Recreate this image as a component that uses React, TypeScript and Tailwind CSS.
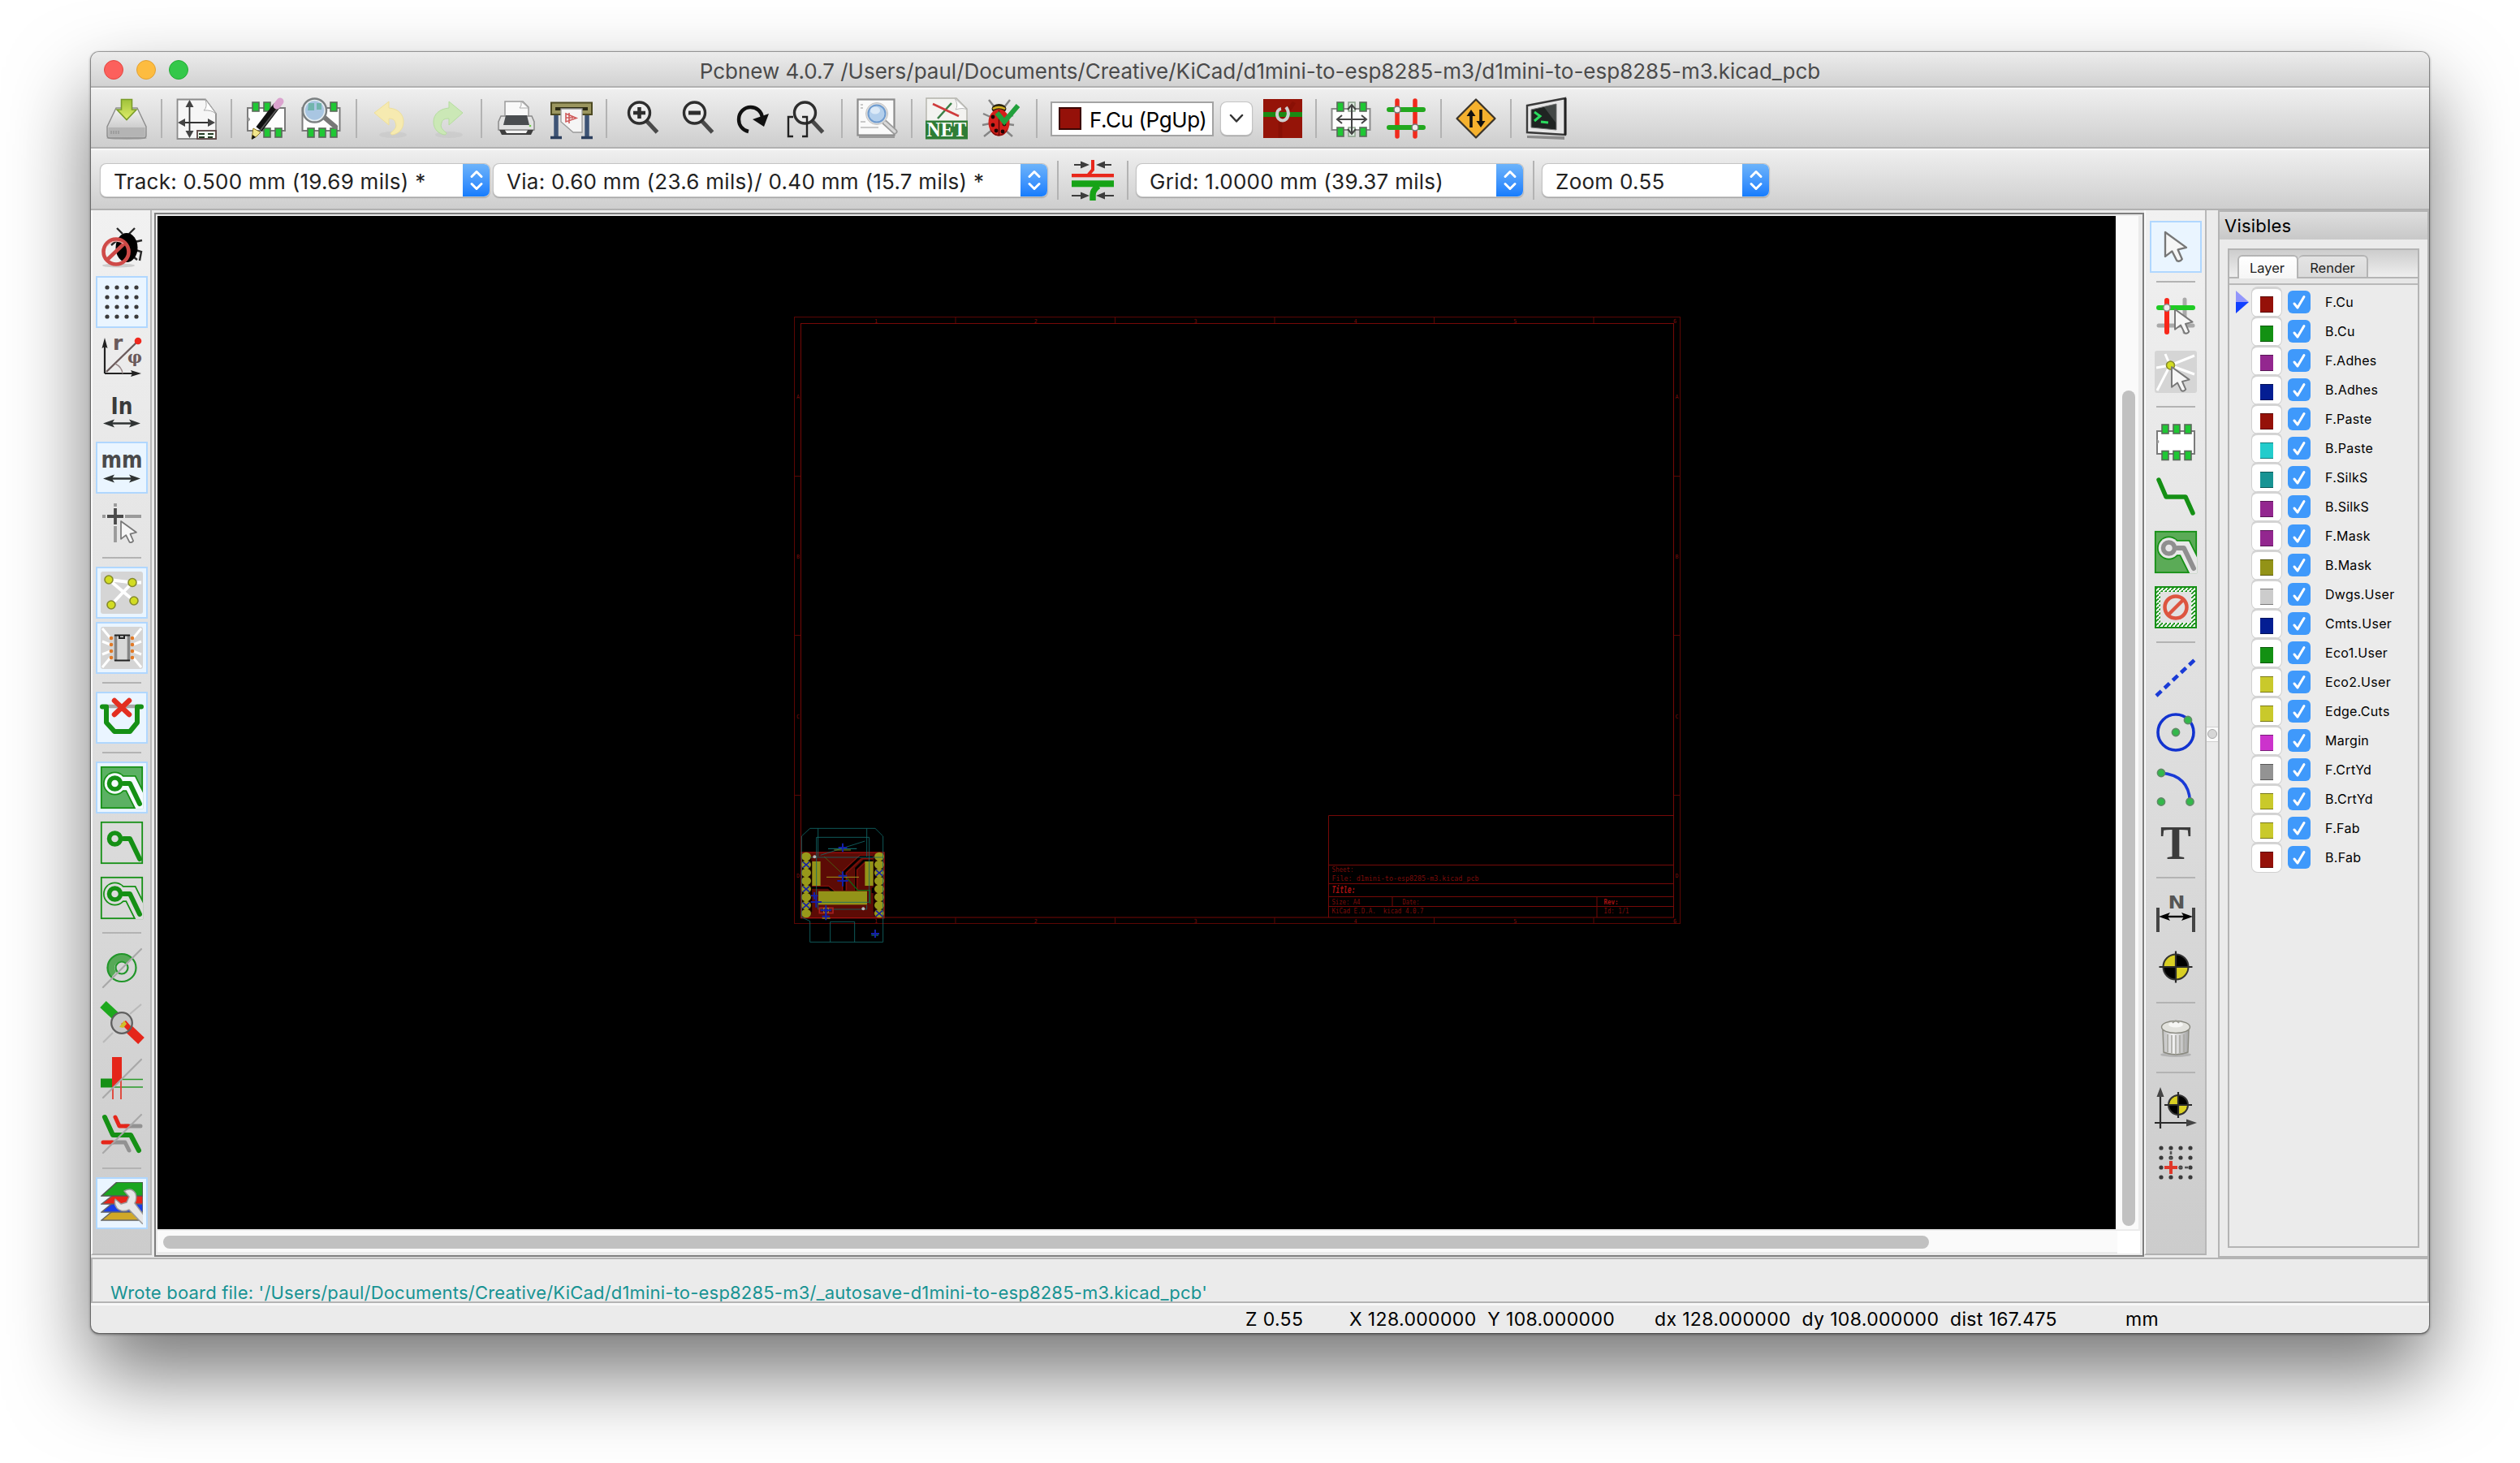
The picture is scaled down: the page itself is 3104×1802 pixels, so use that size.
import React from "react";

const G = "#159015";
const DK = "#3c3c3c";

function Ico({ children }: { children: React.ReactNode }) {
  return (
    <svg viewBox="0 0 52 52" className="h-[52px] w-[52px] shrink-0 overflow-visible" fill="none">
      {children}
    </svg>
  );
}

/* ---------- shared icon parts ---------- */

function Pad({ x, y }: { x: number; y: number }) {
  return <rect x={x - 4} y={y} width="8" height="11" fill="#1fc834" stroke="#5a6a5a" strokeWidth="1.6" />;
}

function Pointer({ x, y, s = 1 }: { x: number; y: number; s?: number }) {
  return (
    <path
      transform={`translate(${x} ${y}) scale(${s})`}
      d="M0 0V23L6.500 18 11 27Q14 28.500 16 25.500L12 16.500 20 14.500Z"
      fill="#f6f6f6"
      stroke="#777"
      strokeWidth="1.8"
      strokeLinejoin="round"
    />
  );
}

function Diag() {
  return <path d="M3 50 50 3" stroke="#a8a8a8" strokeWidth="2.200" strokeLinecap="round" />;
}

function Magnifier({ x = 23.5 }: { x?: number }) {
  return (
    <>
      <path d={`M${x + 9} 29 ${x + 22} 43`} stroke="#4a4a4a" strokeWidth="5" />
      <circle cx={x} cy="19" r="13" stroke="#2e2e2e" strokeWidth="3.400" fill="#ffffff" fillOpacity=".35" />
    </>
  );
}

function DoubleArrow({ y, a = 3, b = 49, c = "#2f3333" }: { y: number; a?: number; b?: number; c?: string }) {
  return (
    <>
      <path d={`M${a + 6} ${y}H${b - 6}`} stroke={c} strokeWidth="2.400" />
      <path d={`M${a} ${y}l14 -5l-3 5l3 5ZM${b} ${y}l-14 -5l3 5l-3 5Z`} fill={c} />
    </>
  );
}

function Target({ x, y, r }: { x: number; y: number; r: number }) {
  return (
    <>
      <circle cx={x} cy={y} r={r} fill="#000" stroke="#333" strokeWidth="2" />
      <path
        d={`M${x - 1} ${y - 1}V${y - r + 1}A${r - 1} ${r - 1} 0 0 0 ${x - r + 1} ${y - 1}ZM${x + 1} ${y + 1}V${y + r - 1}A${r - 1} ${r - 1} 0 0 0 ${x + r - 1} ${y + 1}Z`}
        fill="#d9cf24"
      />
      <path d={`M${x - r - 5} ${y}H${x + r + 5}M${x} ${y - r - 4}V${y + r + 4}`} stroke="#2a2a2a" strokeWidth="2.200" />
    </>
  );
}

const TRACK = "M28 21H36L48 46";

function Zone({ fill, gap, core = G, outline = true }: { fill: string; gap: string; core?: string; outline?: boolean }) {
  return (
    <>
      <rect x=".8" y=".8" width="50.400" height="50.400" fill={fill} stroke={G} strokeWidth="1.800" />
      {outline && (
        <svg x="0" y="0" width="52" height="52" viewBox="0 0 52 52">
          <circle cx="17.500" cy="21" r="14.500" fill={G} />
          <path d="M22 21H37L55 57" stroke={G} strokeWidth="20" />
          <circle cx="17.500" cy="21" r="12.800" fill={gap} />
          <path d="M22 21H37L55 57" stroke={gap} strokeWidth="16.500" />
        </svg>
      )}
      <path d={TRACK} stroke={core} strokeWidth="6" strokeLinecap="round" strokeLinejoin="round" />
      <circle cx="17.500" cy="21" r="7" stroke={core} strokeWidth="5.500" />
    </>
  );
}

function GridDots() {
  return (
    <>
      {[8, 20, 32, 44].map((y) =>
        [8, 20, 32, 44].map((x) => <circle key={`${x}-${y}`} cx={x} cy={y} r="2.600" fill="#3a3a3a" />)
      )}
    </>
  );
}

/* ---------- top toolbar icons ---------- */

const Save = () => (
  <Ico>
    <defs>
      <linearGradient id="drv" x1="0" y1="0" x2="0" y2="1">
        <stop offset="0" stopColor="#f4f4f4" />
        <stop offset="1" stopColor="#b9b9b9" />
      </linearGradient>
      <linearGradient id="arr" x1="0" y1="0" x2="0" y2="1">
        <stop offset="0" stopColor="#9fc23a" />
        <stop offset="1" stopColor="#e0ee6a" />
      </linearGradient>
    </defs>
    <ellipse cx="26" cy="50" rx="25" ry="2" fill="#aaa" />
    <path d="M13 13H39L50 36V47Q50 50 47 50H5Q2 50 2 47V36Z" fill="url(#drv)" stroke="#8d8d8d" strokeWidth="1.400" />
    <path d="M3.500 37H48.500V46Q48.500 48.500 46 48.500H6Q3.500 48.500 3.500 46Z" fill="#b4b4b4" />
    <path d="M7 41V45M10 41V45M13 41V45M16 41V45" stroke="#888" />
    <path d="M19.500 2.500H32.500V15H38L26 27.500 14 15H19.500Z" fill="url(#arr)" stroke="#7a9c2a" strokeWidth="1.600" />
  </Ico>
);

const PageSettings = () => (
  <Ico>
    <path d="M2.500 2.500H37L50 20V51H2.500Z" fill="#f6f6f6" stroke="#8b8b8b" strokeWidth="1.800" />
    <path d="M37 2.500Q40 12 35 16Q44 15 50 20Z" fill="#fff" stroke="#aaa" />
    <path d="M17.500 5V48M6 31H45" stroke="#333" strokeWidth="1.800" />
    <path d="M17.500 3l-5 9h10ZM17.500 50l-5-9h10ZM3 31l9-5v10ZM49 31l-9-5v10Z" fill="#444" />
    <rect x="27" y="41" width="23" height="10" fill="#f4fff4" stroke="#5b4444" strokeWidth="1.800" />
    <path d="M29 45H36M40 45H47M29 49H36M40 49H46" stroke="#223a22" strokeWidth="2.200" />
  </Ico>
);

const ModuleEdit = () => (
  <Ico>
    <rect x="3" y="13" width="46" height="28" fill="#fdfdfd" stroke="#7b7b7b" strokeWidth="2" />
    <path d="M3 24Q8 27 3 30" fill="#999" stroke="#888" />
    <Pad x={13} y={6} /><Pad x={27} y={6} />
    <Pad x={27} y={38} /><Pad x={41} y={38} />
    <path d="M17 39 39 10" stroke="#111" strokeWidth="9" />
    <path d="M19 40 41 12" stroke="#555" strokeWidth="2" />
    <path d="M39 10 43 5" stroke="#dba3cf" strokeWidth="9" strokeLinecap="round" />
    <path d="M10 38 19 43 14 48 8 51Z" fill="#f2e58a" stroke="#8a7620" />
    <path d="M8 52 9 46 13 49Z" fill="#111" />
  </Ico>
);

const ModuleView = () => (
  <Ico>
    <rect x="2.500" y="13" width="46" height="28" fill="#fdfdfd" stroke="#7b7b7b" strokeWidth="2" />
    <Pad x={41} y={6} />
    <Pad x={13} y={38} /><Pad x={27} y={38} /><Pad x={41} y={38} />
    <path d="M30 25 43 36" stroke="#777" strokeWidth="6" strokeLinecap="round" />
    <circle cx="17.500" cy="16" r="14" fill="#a9c6e2" stroke="#7a7f80" strokeWidth="3.500" />
    <circle cx="17.500" cy="16" r="12.500" stroke="#e6eef2" strokeWidth="1.600" />
    <path d="M10 7H17V16H9ZM20 7H26V15H20Z" fill="#63b0a0" opacity=".8" />
  </Ico>
);

const UndoI = () => (
  <Ico>
    <ellipse cx="28" cy="46" rx="17" ry="4" fill="#c6c6c6" opacity=".6" />
    <path d="M5 19 23 5V13C35 14 41 21 41 30C41 39 35 45 27 46C26 46 24 44 26 43C31 39 33 36 31 31C30 27 27 26 23 26V34Z" fill="#f6eab0" stroke="#eedf9a" />
  </Ico>
);

const RedoI = () => (
  <Ico>
    <ellipse cx="29" cy="46" rx="17" ry="4" fill="#c6c6c6" opacity=".6" />
    <path d="M46 19 29 5V13C17 14 10 21 10 30C10 39 16 45 24 46C25 46 27 44 25 43C20 39 18 36 20 31C21 27 24 26 29 26V34Z" fill="#cbe8b6" stroke="#b5dd9f" />
  </Ico>
);

const PrintI = () => (
  <Ico>
    <path d="M12 5H34L41 12V26H12Z" fill="#f8f8f8" stroke="#9a9a9a" strokeWidth="1.500" />
    <path d="M32 5Q33 11 30 13L41 13Z" fill="#fff" stroke="#aaa" />
    <path d="M7 23H45L48 30V40H4V30Z" fill="#e2e2e2" stroke="#8a8a8a" strokeWidth="1.500" />
    <path d="M13 22H39L42 34H10Z" fill="#4a4d50" />
    <path d="M5 40H47L44 46H8Z" fill="#3e3e3e" />
    <path d="M12 40.500H40L38 44H14Z" fill="#f4f4f4" />
    <circle cx="43" cy="35" r="1.300" fill="#6fd04a" />
  </Ico>
);

const PlotI = () => (
  <Ico>
    <path d="M7 22V48M45 22V48" stroke="#3d5375" strokeWidth="5.500" />
    <path d="M0 49.500H14M38 49.500H52" stroke="#2c3f5e" strokeWidth="3.400" />
    <rect x="1" y="6.500" width="50" height="14.500" fill="#9b965f" stroke="#4d4a22" strokeWidth="2" />
    <rect x="6" y="12" width="40" height="4" fill="#2b2a14" />
    <path d="M13 14H39V43H28L20 36 13 30Z" fill="#f5f5f5" stroke="#9a9a9a" strokeWidth="1.300" />
    <path d="M19 20V30L32 25.500ZM23 19V32M19 25H28" stroke="#cf5a5a" strokeWidth="1.600" />
  </Ico>
);

const ZoomIn = () => (
  <Ico><Magnifier /><path d="M16 19H31M23.500 12V26" stroke="#2e2e2e" strokeWidth="4.600" /></Ico>
);
const ZoomOut = () => (
  <Ico><Magnifier /><path d="M16 19H31" stroke="#2e2e2e" strokeWidth="5" /></Ico>
);
const Refresh = () => (
  <Ico>
    <path d="M22 42C14 40 10 34 10 27C10 18 17 12 24.500 12C32 12 38 17 39 25" stroke="#111" strokeWidth="4.400" />
    <path d="M27 27 47 20 41 36Z" fill="#111" />
  </Ico>
);
const ZoomFit = () => (
  <Ico>
    <Magnifier />
    <path d="M9 24H3V48H9M20 24H26V48H20" stroke="#222" strokeWidth="2.400" />
  </Ico>
);

const FindI = () => (
  <Ico>
    <rect x="2.500" y="2.500" width="45" height="44" fill="#fafafa" stroke="#8c8c8c" strokeWidth="2.200" />
    <rect x="4" y="47" width="44" height="3" fill="#999" />
    <path d="M6 9H9M6 13H9M6 30H12M6 37H28" stroke="#c9c9c9" strokeWidth="2" />
    <path d="M36 31 48 42" stroke="#9b9b9b" strokeWidth="7" strokeLinecap="round" />
    <path d="M36 31 48 42" stroke="#d8d8d8" strokeWidth="3.500" strokeLinecap="round" />
    <circle cx="26" cy="20" r="13.500" fill="#dcdcdc" stroke="#c4c4c4" />
    <circle cx="26" cy="20" r="10.500" fill="#b3cfec" stroke="#6f9cd0" strokeWidth="2" />
    <ellipse cx="24" cy="16" rx="6" ry="4.500" fill="#dbe9f7" />
  </Ico>
);

const NetI = () => (
  <Ico>
    <path d="M1 1H38L51 14V50H1Z" fill="#f3f3f0" stroke="#b2b2aa" strokeWidth="1.400" />
    <path d="M36 1Q41 10 37 15Q46 12 51 15Z" fill="#fff" stroke="#bbb" />
    <path d="M32 7 15 26" stroke="#3a8046" strokeWidth="2.600" />
    <path d="M9 8 41 23" stroke="#cf3b3b" strokeWidth="2.600" />
    <rect y="28.500" width="52" height="23" fill="#2e7d36" />
    <text x="26" y="48" textAnchor="middle" fontFamily="Liberation Serif, serif" fontWeight="700" fontSize="25" textLength="49" lengthAdjust="spacingAndGlyphs" fill="#fff">NET</text>
  </Ico>
);

const BugI = () => (
  <Ico>
    <path d="M17 12 10 3M29 12 36 3M12 24 3 20M12 32 2 34M14 40 4 48M33 24 40 22M34 33 41 34M31 41 39 48" stroke="#858585" strokeWidth="2.400" />
    <ellipse cx="22.500" cy="14" rx="9" ry="6" fill="#2a2410" />
    <path d="M15 14Q22 10 30 14" stroke="#d8b420" strokeWidth="2.400" />
    <ellipse cx="22.500" cy="31" rx="13" ry="16.500" fill="#d31f1a" />
    <path d="M11 38Q22 54 34 38Q30 47 22 47.500Q14 47 11 38" fill="#7a0d0a" />
    <path d="M22.500 16V47" stroke="#5c0b08" strokeWidth="1.400" />
    {[[15, 24], [29, 33], [15, 34], [19, 41], [27, 42]].map(([x, y]) => <circle key={`${x}${y}`} cx={x} cy={y} r="2.400" fill="#1d0505" />)}
    <path d="M20 19 29 30 46 10" stroke="#22a03c" strokeWidth="6" />
  </Ico>
);

const LayerPair = () => (
  <Ico>
    <rect x="2" y="2" width="48" height="48" fill="#951408" />
    <path d="M23 50V32L40 6" stroke="#8a1005" strokeWidth="5" />
    <rect x="2" y="18" width="48" height="6" fill="#1c8a14" />
    <path d="M24 14C17 15 17 28 26 28.500C33 28 35 18 30 12" stroke="#cfcfcf" strokeWidth="4" />
  </Ico>
);

const ModuleMode = () => (
  <Ico>
    <rect x="2.500" y="14" width="47" height="26" fill="#fdfdfd" stroke="#8b8b8b" strokeWidth="2" />
    <Pad x={13} y={6} /><Pad x={41} y={6} /><Pad x={13} y={37} /><Pad x={41} y={37} />
    <rect x="23" y="6" width="8" height="11" fill="#dfeee2" stroke="#8aa08a" strokeWidth="1.500" />
    <rect x="23" y="37" width="8" height="11" fill="#dfeee2" stroke="#8aa08a" strokeWidth="1.500" />
    <path d="M9 27H45M27 9V45" stroke="#444" strokeWidth="2" />
    <path d="M15 22 9 27 15 32M39 22 45 27 39 32M22 15 27 9 32 15M22 39 27 45 32 39" stroke="#444" strokeWidth="2" />
  </Ico>
);

const TrackMode = () => (
  <Ico>
    <path d="M15 4V48M37 4V48" stroke="#f02a1c" strokeWidth="5.500" strokeLinecap="round" />
    <path d="M5 15H47M5 37H47" stroke="#22a81e" strokeWidth="6" strokeLinecap="round" />
    <circle cx="15" cy="15" r="4" fill="#eee" stroke="#777" strokeWidth="1.600" />
    <circle cx="37" cy="37" r="4" fill="#eee" stroke="#777" strokeWidth="1.600" />
  </Ico>
);

const RouterI = () => (
  <Ico>
    <path d="M26 2.500 49.500 26 26 49.500 2.500 26Z" fill="#f5b12e" stroke="#39332a" strokeWidth="2.200" strokeLinejoin="round" />
    <path d="M20 37V20M32 15V32" stroke="#111" strokeWidth="3.600" />
    <path d="M14.500 23 20 15 25.500 23ZM26.500 29 32 37 37.500 29Z" fill="#111" />
  </Ico>
);

const Terminal = () => (
  <Ico>
    <path d="M3 47 49 48V52L3 50Z" fill="#8a8a8a" />
    <path d="M3 10 50 1V46L3 43Z" fill="#e6e6e6" stroke="#3a3a3a" strokeWidth="2.400" />
    <path d="M50 1V46" stroke="#222" strokeWidth="3" />
    <path d="M8 15 39 8V40L8 37Z" fill="#1f2422" stroke="#777" />
    <path d="M24 12 39 8V32Z" fill="#5a5f5d" opacity=".6" />
    <path d="M12 18 19 23 12 29" stroke="#2adb5e" strokeWidth="3" />
    <path d="M20 30 29 31" stroke="#2adb5e" strokeWidth="3" />
  </Ico>
);

const AutoTrack = () => (
  <Ico>
    <path d="M26 1V13L20 20" stroke="#e8271b" strokeWidth="4" />
    <rect y="18" width="52" height="4.300" fill="#e8271b" />
    <rect y="26.300" width="52" height="8" fill="#17a317" />
    <path d="M33 33Q26 38 26 44V51" stroke="#17a317" strokeWidth="7.500" />
    <path d="M3 7H16M36 7H49M0 45H14M38 45H52" stroke="#3c3c3c" strokeWidth="2.200" />
    <path d="M11 2.500 22 7 11 11.500ZM41 2.500 30 7 41 11.500ZM11 40.500 22 45 11 49.500ZM41 40.500 30 45 41 49.500Z" fill="#3c3c3c" />
  </Ico>
);

/* ---------- left toolbar icons ---------- */

const DrcOff = () => (
  <Ico>
    <ellipse cx="22" cy="49" rx="20" ry="2.500" fill="#ccc" />
    <path d="M27 10 20 3M35 10 42 3M42 20 51 18M43 30 50 32 48 43M40 38 45 42M20 18 13 24" stroke="#2a2a2a" strokeWidth="2.400" />
    <ellipse cx="32" cy="27" rx="13.500" ry="18" fill="#000" />
    <circle cx="19" cy="32" r="15.500" stroke="#cf4a48" strokeWidth="4.600" />
    <path d="M8 42 30 21" stroke="#cf4a48" strokeWidth="4.600" />
    <path d="M8 25A14 14 0 0 1 28 22" stroke="#f0a9a6" strokeWidth="1.200" />
  </Ico>
);

const Polar = () => (
  <Ico>
    <path d="M5 46V10M5 46H43" stroke="#222" strokeWidth="2.200" />
    <path d="M5 2 1.500 15 5 13 8.500 15ZM50 46 37 42 39 46 37 50Z" fill="#222" />
    <path d="M7 44 45 7" stroke="#6a5a5a" strokeWidth="2.400" />
    <path d="M18 34Q26 38 27 46" stroke="#9a8a8a" strokeWidth="1.500" />
    <circle cx="46" cy="6" r="4.300" fill="#f0281e" />
    <text x="15" y="17" fontFamily="DejaVu Sans, sans-serif" fontWeight="700" fontSize="25" fill="#6a5a5a">r</text>
    <text x="33" y="33" fontFamily="DejaVu Serif, serif" fontWeight="700" fontSize="21" textLength="18" lengthAdjust="spacingAndGlyphs" fill="#6a5a5a">φ</text>
  </Ico>
);

const Inches = () => (
  <Ico>
    <text x="12.500" y="27.500" fontFamily="DejaVu Sans, sans-serif" fontWeight="700" fontSize="29" textLength="27" lengthAdjust="spacingAndGlyphs" fill="#3a3a3a">In</text>
    <DoubleArrow y={39.500} />
  </Ico>
);
const Millis = () => (
  <Ico>
    <text x="0.500" y="25.500" fontFamily="DejaVu Sans, sans-serif" fontWeight="700" fontSize="28" textLength="51" lengthAdjust="spacingAndGlyphs" fill="#4a4a4a">mm</text>
    <DoubleArrow y={39.500} />
  </Ico>
);
const CursorShape = () => (
  <Ico>
    <path d="M18 2V6M18 30V50M2 18H6M30 18H50" stroke="#9a9a9a" strokeWidth="3.800" />
    <path d="M18 8V28M8 18H28" stroke="#4a4a4a" strokeWidth="3.800" />
    <Pointer x={25} y={24} s={0.95} />
  </Ico>
);
const Rats = () => (
  <Ico>
    <rect width="52" height="52" rx="3" fill="#d5d5d5" />
    <path d="M10 10 41 36M39 13.500 13 41M10 10 39 13.500M39 13.500H50" stroke="#fff" strokeWidth="3.800" />
    {[[10, 10], [39, 13.5], [41, 36], [13, 41]].map(([x, y]) => <circle key={x} cx={x} cy={y} r="5" fill="#d2dc22" stroke="#858a2c" strokeWidth="1.600" />)}
  </Ico>
);
const ModRats = () => (
  <Ico>
    <rect width="52" height="52" rx="3" fill="#d5d5d5" />
    <path d="M12 14 2 2M12 22 2 18M12 30 2 34M12 38 2 50M40 14 50 2M40 22 50 18M40 30 50 34M40 38 50 50" stroke="#fff" strokeWidth="3" />
    <rect x="17" y="11" width="18.500" height="30" fill="#d8d8d8" />
    <path d="M18.500 10V42M34.500 10V42" stroke="#868686" strokeWidth="3.600" />
    <path d="M17 10.500H36M17 41.500H36" stroke="#222" strokeWidth="2" />
    <path d="M23 10V14H29V10" stroke="#222" strokeWidth="2" />
    {[14, 22, 30, 38].map((y) => <React.Fragment key={y}><circle cx="13" cy={y} r="2.300" fill="#e07a28" /><circle cx="39" cy={y} r="2.300" fill="#e07a28" /></React.Fragment>)}
  </Ico>
);
const DelTrack = () => (
  <Ico>
    <path d="M8 12H44" stroke="#a8a8a8" strokeWidth="4.500" />
    <path d="M2 12.500H7V32L17 43H36L45 32V12.500H50" stroke={G} strokeWidth="6" strokeLinejoin="round" strokeLinecap="round" />
    <path d="M17 5 35 22M35 5 17 22" stroke="#e32e20" strokeWidth="6.500" strokeLinecap="round" />
  </Ico>
);
const PadSketch = () => (
  <Ico>
    <path d="M13 38A18 17 0 0 1 39 14L32 20A9 8 0 0 0 19 31Z" fill="#57a957" />
    <ellipse cx="26" cy="26" rx="17.500" ry="17" stroke="#22962a" strokeWidth="2.200" />
    <circle cx="26" cy="26" r="7.500" stroke="#22962a" strokeWidth="2.200" />
    <Diag />
  </Ico>
);
const ViaSketch = () => (
  <Ico>
    <path d="M3 3 19 18" stroke="#1da81d" strokeWidth="11" />
    <path d="M28 27 50 48" stroke="#e5261a" strokeWidth="11" />
    <circle cx="26" cy="26" r="12.500" fill="#c6c6c6" />
    <path d="M25 27 31 23 38 31 34 36Z" fill="#e5261a" />
    <path d="M23 31 29 23 32 27 28 32Z" fill="#cfc02c" />
    <circle cx="26" cy="26" r="12.800" stroke="#5f5f5f" strokeWidth="2.300" />
    <path d="M3 50 15 38M36 15 50 3" stroke="#bababa" strokeWidth="2.200" />
  </Ico>
);
const TrackSketch = () => (
  <Ico>
    <rect y="26.500" width="14" height="11" fill={G} />
    <path d="M14 37H52M26 27.500H52" stroke="#2a9a2a" strokeWidth="1.700" />
    <path d="M14 0H26V27L14 39Z" fill="#e5261a" />
    <path d="M15 38V52M25 28V52" stroke="#e0483c" strokeWidth="1.900" />
    <Diag />
  </Ico>
);
const Contrast = () => (
  <Ico>
    <path d="M30 17H49M14 37H30L35 47" stroke="#929292" strokeWidth="5" strokeLinejoin="round" strokeLinecap="round" />
    <path d="M18 6 23 17H34M3 37H14" stroke="#e5261a" strokeWidth="5" strokeLinejoin="round" strokeLinecap="round" />
    <path d="M5 6 15 28H37L47 47" stroke={G} strokeWidth="6" strokeLinejoin="round" strokeLinecap="round" />
    <Diag />
  </Ico>
);
const LayersMgr = () => (
  <svg viewBox="0 0 52 52" className="h-[52px] w-[52px] shrink-0" fill="none">
    <path d="M1 47 18 33H52V47Z" fill="#d0a828" stroke="#666" strokeWidth="1.500" />
    <path d="M1 37 18 23H52V37Z" fill="#1a3ee8" stroke="#666" strokeWidth="1.500" />
    <path d="M1 27 18 14H52V27Z" fill="#e5261a" stroke="#666" strokeWidth="1.500" />
    <path d="M1 17 20 0H52V17Z" fill="#1aa51f" stroke="#555" strokeWidth="1.500" />
    <path
      d="M29 11Q38 6 43 14Q45 21 42 26L54 42V54L35 34Q26 38 20 32Q16 27 18 21L25 27 32 25 35 18Z"
      fill="#e6e6e6"
      stroke="#9a9a9a"
      strokeWidth="1.500"
      strokeLinejoin="round"
    />
  </svg>
);

/* ---------- right toolbar icons ---------- */

const PtrI = () => <Ico><Pointer x={13} y={8} s={1.3} /></Ico>;
const NetHl = () => (
  <Ico>
    <path d="M37 5V45M5 37H47" stroke="#a9a9a9" strokeWidth="5" strokeLinecap="round" />
    <path d="M15 6V45" stroke="#f8271a" strokeWidth="6" strokeLinecap="round" />
    <path d="M5 15H47" stroke="#1fcb24" strokeWidth="6" strokeLinecap="round" />
    <circle cx="15" cy="15" r="4.200" fill="#eee" stroke="#888" strokeWidth="1.600" />
    <Pointer x={25} y={17} s={1.08} />
  </Ico>
);
const LocalRats = () => (
  <Ico>
    <rect width="52" height="52" rx="3" fill="#d5d5d5" />
    <path d="M19 18 13 4M19 18 49 6M19 18 2 21M19 18 49 29M19 18 3 49" stroke="#fff" strokeWidth="3" />
    <circle cx="19.500" cy="18" r="5" fill="#d2dc22" stroke="#858a2c" strokeWidth="1.600" />
    <Pointer x={21} y={20} s={1.08} />
  </Ico>
);
const AddModule = () => (
  <Ico>
    <rect x="3" y="13" width="46" height="28" fill="#fff" stroke="#7b7b7b" strokeWidth="2" />
    <path d="M3 23Q8 26 3 29" fill="#999" />
    {[13, 27, 41].map((x) => <React.Fragment key={x}><Pad x={x} y={5} /><Pad x={x} y={37.500} /></React.Fragment>)}
  </Ico>
);
const AddTrack = () => (
  <Ico><path d="M5 5 14 26H38L47 46" stroke={G} strokeWidth="5.500" strokeLinejoin="round" strokeLinecap="round" /></Ico>
);
const Keepout = () => (
  <Ico>
    <defs>
      <pattern id="hatch" width="5" height="5" patternUnits="userSpaceOnUse">
        <rect width="5" height="5" fill="#fff" />
        <path d="M-1 6 6 -1" stroke={G} strokeWidth="1.800" />
      </pattern>
    </defs>
    <rect x="1" y="1" width="50" height="50" fill="url(#hatch)" stroke={G} strokeWidth="2" />
    <rect x="7" y="7" width="38" height="38" fill="#e2e2e2" />
    <circle cx="26" cy="26" r="13.500" stroke="#dd5540" strokeWidth="4.500" />
    <path d="M17 35 35 17" stroke="#dd5540" strokeWidth="4.500" />
  </Ico>
);
const DashLine = () => (
  <Ico><path d="M2 49 49 5" stroke="#1a3bd6" strokeWidth="4.600" strokeDasharray="8.500 5.400" /></Ico>
);
const Dot = ({ x, y }: { x: number; y: number }) => <circle cx={x} cy={y} r="4.600" fill="#33b84a" stroke="#5f8a66" strokeWidth="1.600" />;
const CircleI = () => (
  <Ico><circle cx="26" cy="26" r="22" stroke="#1233cf" strokeWidth="3.600" /><Dot x={26} y={26} /><Dot x={41} y={11} /></Ico>
);
const ArcI = () => (
  <Ico><path d="M8 8Q42 11 43.500 43" stroke="#1a3bd6" strokeWidth="3.600" /><Dot x={8} y={8} /><Dot x={8} y={43.500} /><Dot x={43.500} y={43.500} /></Ico>
);
const TextI = () => (
  <Ico>
    <text x="26" y="45.500" textAnchor="middle" fontFamily="Liberation Serif, serif" fontWeight="700" fontSize="60" textLength="38" lengthAdjust="spacingAndGlyphs" fill={DK}>T</text>
  </Ico>
);
const DimI = () => (
  <Ico>
    <path d="M4 20V50M48 20V50" stroke="#444" strokeWidth="4" />
    <DoubleArrow y={31} a={5} b={47} c="#000" />
    <text x="27" y="21" textAnchor="middle" fontFamily="DejaVu Sans, sans-serif" fontWeight="700" fontSize="22" textLength="21" lengthAdjust="spacingAndGlyphs" fill="#555">N</text>
  </Ico>
);
const TargetI = () => <Ico><Target x={26} y={25} r={15.5} /></Ico>;
const TrashI = () => (
  <Ico>
    <defs>
      <linearGradient id="can" x1="0" x2="1" y1="0" y2="0">
        <stop offset="0" stopColor="#bdbdbd" />
        <stop offset=".4" stopColor="#f2f2f2" />
        <stop offset="1" stopColor="#a5a5a5" />
      </linearGradient>
    </defs>
    <ellipse cx="26" cy="47" rx="19" ry="3" fill="#b3b3b3" />
    <path d="M10 17 11 44Q26 50 41 44L42 17Z" fill="url(#can)" stroke="#8a8a80" strokeWidth="1.400" />
    <path d="M16 22V44M21 23V45M26 23V46M31 23V45M36 22V44" stroke="#a8a8a2" strokeWidth="1.600" />
    <ellipse cx="26" cy="13" rx="17.500" ry="7.500" fill="#e2e2dd" stroke="#8a8a80" strokeWidth="1.400" />
    <ellipse cx="26" cy="10" rx="9" ry="3.500" fill="#f6f6f4" />
    <path d="M22 8Q26 3 30 8" stroke="#9a9a92" strokeWidth="2" />
  </Ico>
);
const OriginI = () => (
  <Ico>
    <path d="M7 52V8M0 45H44" stroke="#2a2a2a" strokeWidth="2.200" />
    <path d="M7 1 2.500 13H11.500ZM52 45 39 40.500V49.500Z" fill="#444" />
    <Target x={29} y={23} r={12} />
  </Ico>
);
const GridOrigin = () => (
  <Ico>
    <GridDots />
    <path d="M20 12V22M30 32H44" stroke="#555" strokeWidth="2.600" strokeDasharray="4 3" />
    <path d="M12 32H28M20 24V40" stroke="#e0382a" strokeWidth="4" />
  </Ico>
);

/* ---------- chrome ---------- */

const VSep = () => <div className="h-12 w-[2px] shrink-0 bg-[#b3b3b3]" />;
const HSep = () => <div className="my-[6px] h-[2px] w-12 shrink-0 bg-[#b3b3b3]" />;

function Slot({ on, children }: { on?: boolean; children: React.ReactNode }) {
  return (
    <div
      className={
        on
          ? "flex h-16 w-16 shrink-0 items-center justify-center border-2 border-[#b0d7ff] bg-[#eaf5ff]"
          : "flex h-16 w-16 shrink-0 items-center justify-center"
      }
    >
      {children}
    </div>
  );
}

function Select({ className, label }: { className: string; label: string }) {
  return (
    <div className={`flex h-10 shrink-0 overflow-hidden rounded-[7px] bg-white shadow-[0_0_0_1px_#c4c4c4,0_1px_1px_1px_#a5a5a5] ${className}`}>
      <div className="flex flex-1 items-center whitespace-pre pl-4 pt-[2px] text-[26px] tracking-[0.280px] text-[#222]">{label}</div>
      <div className="flex w-[33px] items-center justify-center bg-linear-to-b from-[#6cb3fa] to-[#147cfd]">
        <svg viewBox="0 0 18 28" className="h-7 w-[18px]" fill="none" stroke="#fff" strokeWidth="3" strokeLinecap="round" strokeLinejoin="round">
          <path d="M3 9.500 9 3.500 15 9.500M3 18.500 9 24.500 15 18.500" />
        </svg>
      </div>
    </div>
  );
}

const LAYERS: [string, string][] = [
  ["F.Cu", "#951109"], ["B.Cu", "#139113"], ["F.Adhes", "#93278f"], ["B.Adhes", "#041e93"],
  ["F.Paste", "#951109"], ["B.Paste", "#22cccc"], ["F.SilkS", "#179393"], ["B.SilkS", "#93278f"],
  ["F.Mask", "#93278f"], ["B.Mask", "#939317"], ["Dwgs.User", "#cccccc"], ["Cmts.User", "#041e93"],
  ["Eco1.User", "#139113"], ["Eco2.User", "#c9c92b"], ["Edge.Cuts", "#c9c92b"], ["Margin", "#cc33cc"],
  ["F.CrtYd", "#939393"], ["B.CrtYd", "#c9c92b"], ["F.Fab", "#c9c92b"], ["B.Fab", "#951109"],
];

function LayerRow({ name, color, active }: { name: string; color: string; active: boolean }) {
  return (
    <div className="flex h-9 items-center">
      <div className="ml-2 w-5">
        {active && (
          <svg viewBox="0 0 16 28" className="h-7 w-4">
            <path d="M0 0 16 14H0Z" fill="#9296fb" />
            <path d="M0 28 16 14H0Z" fill="#1240ff" />
          </svg>
        )}
      </div>
      <div className="flex h-9 w-9 items-center justify-center rounded-[7px] border-t-2 border-[#d4d4d4] bg-white shadow-[0_0_0_1px_#d0d0d0]">
        <div className="mt-[3px] h-5 w-4 border-y-[1.500px] border-black/40" style={{ backgroundColor: color }} />
      </div>
      <div className="ml-2 flex h-7 w-7 items-center justify-center rounded-[6px] bg-[#3f99fb]">
        <svg viewBox="0 0 20 20" className="h-5 w-5" fill="none" stroke="#fff" strokeWidth="3" strokeLinecap="round" strokeLinejoin="round">
          <path d="M4 12 8 17 16 3.500" />
        </svg>
      </div>
      <div className="ml-[18px] text-[16px] tracking-[0.280px] text-black">{name}</div>
    </div>
  );
}

/* ---------- board drawing ---------- */

function SheetText({ x, y, w, children, bold, color = "#7d0c0a", size = 8.5 }: { x: number; y: number; w: number; children: string; bold?: boolean; color?: string; size?: number }) {
  return (
    <text x={x} y={y} textLength={w} lengthAdjust="spacingAndGlyphs" fontFamily="DejaVu Sans Mono, monospace" fontSize={size} fontWeight={bold ? 700 : 400} fontStyle={bold && size > 9 ? "italic" : "normal"} fill={color} className="whitespace-pre">
      {children}
    </text>
  );
}

function Plus({ x, y, s = 16 }: { x: number; y: number; s?: number }) {
  return <path d={`M${x - s} ${y}H${x + s}M${x} ${y - s}V${y + s}`} stroke="#1420a8" strokeWidth="6" />;
}

function Board() {
  const padYs = [165, 195, 225, 255, 285, 315, 345, 375];
  return (
    <g transform="translate(960 1000) scale(.33333)" fill="none">
      <rect x="80" y="150" width="307" height="242" fill="#5c0b05" stroke="#a01010" strokeWidth="4" />
      <path d="M118 180V370M350 175V370" stroke="#000" strokeWidth="5" />
      <path d="M84 170H118V380H84ZM350 160H384V385H350Z" fill="#1c0301" />
      <path d="M120 280H180L200 296M345 166H300L240 222V290M345 180H312L280 212V290M345 280V300" stroke="#000" strokeWidth="8" />
      <path d="M120 274H183L206 293M345 160H297L233 219V290M345 173H305L248 226V290M345 188H316L288 214V290M278 292V208" stroke="#9a1410" strokeWidth="2.500" />
      <path d="M165 165 250 245" stroke="#4a5a12" strokeWidth="3" />
      <path d="M250 245 290 290H335V340" stroke="#0f6a12" strokeWidth="4" />
      <rect x="121" y="183" width="31" height="90" fill="#939318" />
      <rect x="316" y="183" width="31" height="90" fill="#939318" />
      <rect x="144" y="293" width="180" height="50" fill="#939318" />
      {padYs.map((y) => (
        <React.Fragment key={y}>
          <ellipse cx="99" cy={y} rx="18" ry="15.500" fill="#98981a" />
          <ellipse cx="369" cy={y} rx="18" ry="15.500" fill="#98981a" />
        </React.Fragment>
      ))}
      <path d="M87 185 111 206M111 185 87 206M87 275 111 296M111 275 87 296M87 335 111 356M111 335 87 356M357 215 381 236M381 215 357 236M357 365 381 386M381 365 357 386" stroke="#1420a8" strokeWidth="4.500" />
      <path d="M82 390V90L113 61H354L383 90V481H113V404L84 390M143 61V165M323 61V165M137 94H332V334H137ZM113 168H383M188 481V406H278V481M143 334V360H323V345M152 160 316 108" stroke="#126a6a" strokeWidth="2.500" />
      <path d="M180 136H286" stroke="#179090" strokeWidth="2.500" />
      <path d="M202 141H264" stroke="#8a8a18" strokeWidth="3" />
      <path d="M174 241H294" stroke="#b0b020" strokeWidth="2.500" />
      <rect x="148" y="355" width="50" height="19" stroke="#a82020" strokeWidth="5" />
      <path d="M158 393H188" stroke="#939318" strokeWidth="4" />
      <path d="M340 456H366" stroke="#126a6a" strokeWidth="4" />
      <rect x="164" y="356" width="17" height="16" stroke="#a0a020" strokeWidth="2.500" />
      <Plus x={234} y={132} /><Plus x={234} y={236} /><Plus x={234} y={255} s={20} />
      <Plus x={129} y={310} s={13} /><Plus x={136} y={333} s={20} />
      <Plus x={172} y={364} s={20} /><Plus x={172} y={386} s={14} /><Plus x={354} y={450} s={15} />
      <circle cx="130" cy="166" r="6" fill="#b8b8b8" />
      <circle cx="310" cy="358" r="6" fill="#b8b8b8" />
    </g>
  );
}

function Canvas() {
  const xs = [1177, 1373.5, 1570, 1766.5, 1963];
  const ys = [586.5, 782.5, 979.5];
  return (
    <svg viewBox="194 266 2412 1248" className="block h-[1248px] w-[2412px] bg-black">
      <g fill="none" stroke="#5c0604" strokeWidth="1">
        <rect x="978.500" y="390.500" width="1091" height="747" />
        <rect x="986.500" y="398.500" width="1075" height="731.500" stroke="#760907" />
        {xs.map((x) => <path key={x} d={`M${x} 390V398M${x} 1130V1138`} />)}
        {ys.map((y) => <path key={y} d={`M978 ${y}H986M2062 ${y}H2070`} />)}
        <path d="M1636.500 1130V1004.500H2061.500M1636.500 1065.500H2061.500M1636.500 1088.500H2061.500M1636.500 1104.500H2061.500M1636.500 1116.500H2061.500M1715 1104.500V1116.500M1967 1104.500V1130" stroke="#760907" />
      </g>
      {["1", "2", "3", "4", "5", "6"].map((n, i) => (
        <React.Fragment key={n}>
          <SheetText x={1077 + i * 196.8} y={397.5} w={4} size={7}>{n}</SheetText>
          <SheetText x={1077 + i * 196.8} y={1136.5} w={4} size={7}>{n}</SheetText>
        </React.Fragment>
      ))}
      {["A", "B", "C", "D"].map((n, i) => (
        <React.Fragment key={n}>
          <SheetText x={981} y={491 + i * 196.8} w={4} size={7}>{n}</SheetText>
          <SheetText x={2063.5} y={491 + i * 196.8} w={4} size={7}>{n}</SheetText>
        </React.Fragment>
      ))}
      <SheetText x={1640.5} y={1074} w={27} size={9}>Sheet:</SheetText>
      <SheetText x={1640.5} y={1085} w={181} size={9}>File: d1mini-to-esp8285-m3.kicad_pcb</SheetText>
      <SheetText x={1640.5} y={1100} w={29} bold size={12} color="#a81010">Title:</SheetText>
      <SheetText x={1640.5} y={1114} w={35} size={9}>Size: A4</SheetText>
      <SheetText x={1727.5} y={1114} w={21} size={9}>Date:</SheetText>
      <SheetText x={1975.5} y={1114} w={18} bold size={9} color="#a81010">Rev:</SheetText>
      <SheetText x={1640.5} y={1125} w={113} size={9}>KiCad E.D.A.  kicad 4.0.7</SheetText>
      <SheetText x={1975.5} y={1125} w={31} size={9}>Id: 1/1</SheetText>
      <Board />
    </svg>
  );
}

export default function App() {
  return (
    <div className="h-[1802px] w-[3104px] overflow-hidden bg-white pl-[112px] pt-[64px] font-['Inter','Noto_Sans',sans-serif]">
      <div className="flex h-[1578px] w-[2880px] flex-col overflow-hidden rounded-[10px] bg-[#ebebeb] shadow-[0_0_0_1px_rgba(0,0,0,0.28),0_1px_3px_1px_rgba(0,0,0,0.35),0_50px_100px_rgba(0,0,0,0.54)]">
        {/* title bar */}
        <div className="relative flex h-11 shrink-0 items-center justify-center border-b-2 border-[#b1b1b1] bg-linear-to-b from-[#ececec] to-[#d2d2d2]">
          <div className="absolute left-4 top-[10px] flex gap-4">
            <div className="h-6 w-6 rounded-full border border-[#e2463f] bg-[#fc605c]" />
            <div className="h-6 w-6 rounded-full border border-[#e1a033] bg-[#fdbc40]" />
            <div className="h-6 w-6 rounded-full border border-[#24ab35] bg-[#34c84a]" />
          </div>
          <div className="whitespace-nowrap pt-1 text-[26px] text-[#4a4a4a]">
            Pcbnew 4.0.7 /Users/paul/Documents/Creative/KiCad/d1mini-to-esp8285-m3/d1mini-to-esp8285-m3.kicad_pcb
          </div>
        </div>

        {/* main toolbar */}
        <div className="flex h-[75px] shrink-0 items-center gap-4 border-b-2 border-t-2 border-b-[#b1b1b1] border-t-[#f8f8f8] bg-linear-to-b from-[#efefef] to-[#cecece] pl-[18px] pt-[1px]">
          <Save /><VSep /><PageSettings /><VSep /><ModuleEdit /><ModuleView /><VSep />
          <UndoI /><RedoI /><VSep /><PrintI /><PlotI /><VSep />
          <ZoomIn /><ZoomOut /><Refresh /><ZoomFit /><VSep /><FindI /><VSep /><NetI /><BugI /><VSep />
          <div className="flex items-center">
            <div className="flex h-[43px] w-[201px] items-center border-2 border-[#a3a3a3] bg-white pl-2">
              <div className="h-7 w-7 border-2 border-[#3a0502] bg-[#951109]" />
              <div className="ml-[10px] whitespace-nowrap pt-[2px] text-[26px] tracking-[-0.400px] text-black">F.Cu (PgUp)</div>
            </div>
            <div className="ml-[9px] flex h-10 w-[38px] items-center justify-center rounded-[7px] bg-white shadow-[0_0_0_1px_#c4c4c4,0_1px_1px_1px_#a5a5a5]">
              <svg viewBox="0 0 18 12" className="h-3 w-[18px]" fill="none" stroke="#333" strokeWidth="2.500" strokeLinecap="round" strokeLinejoin="round">
                <path d="M2 2 9 9.500 16 2" />
              </svg>
            </div>
            <div className="ml-3"><LayerPair /></div>
          </div>
          <div className="-ml-[2px]"><VSep /></div>
          <ModuleMode /><TrackMode /><VSep /><RouterI /><VSep /><Terminal />
        </div>

        {/* track, via, grid and zoom selectors */}
        <div className="flex h-[76px] shrink-0 items-center border-b-2 border-t-2 border-b-[#b1b1b1] border-t-[#f8f8f8] bg-linear-to-b from-[#efefef] to-[#cecece] pl-3 pt-[2px]">
          <Select className="w-[479px]" label="Track: 0.500 mm (19.69 mils) *" />
          <Select className="ml-[5px] w-[682px]" label="Via: 0.60 mm (23.6 mils)/ 0.40 mm (15.7 mils) *" />
          <div className="ml-3 mr-4"><VSep /></div>
          <AutoTrack />
          <div className="ml-4 mr-[10px]"><VSep /></div>
          <Select className="w-[476px]" label="Grid: 1.0000 mm (39.37 mils)" />
          <div className="ml-3 mr-[10px]"><VSep /></div>
          <Select className="w-[279px]" label="Zoom 0.55" />
        </div>

        {/* work area */}
        <div className="flex h-[1290px] shrink-0">
          <div className="flex h-[1287px] w-[75px] shrink-0 flex-col items-center gap-1 border-b-2 border-l-2 border-r-2 border-b-[#b1b1b1] border-l-[#fafafa] border-r-[#b8b8b8] bg-linear-to-b from-[#f1f1f1] to-[#cccccc] pt-[13px]">
            <Slot><DrcOff /></Slot>
            <Slot on><Ico><GridDots /></Ico></Slot>
            <Slot><Polar /></Slot>
            <Slot><Inches /></Slot>
            <Slot on><Millis /></Slot>
            <Slot><CursorShape /></Slot>
            <HSep />
            <Slot on><Rats /></Slot>
            <Slot on><ModRats /></Slot>
            <HSep />
            <Slot on><DelTrack /></Slot>
            <HSep />
            <Slot on><Ico><Zone fill="#5bb163" gap="#f4faff" /></Ico></Slot>
            <Slot><Ico><Zone fill="none" gap="none" outline={false} /></Ico></Slot>
            <Slot><Ico><Zone fill="none" gap="#dcdcdc" /></Ico></Slot>
            <HSep />
            <Slot><PadSketch /></Slot>
            <Slot><ViaSketch /></Slot>
            <Slot><TrackSketch /></Slot>
            <Slot><Contrast /></Slot>
            <HSep />
            <Slot on><LayersMgr /></Slot>
          </div>

          <div className="ml-[3px] mt-[3px] flex h-[1286px] w-[2451px] shrink-0 flex-col border-2 border-[#7e7e7e] bg-[#ebebeb] pl-[2px] pt-[2px]">
            <div className="flex">
              <Canvas />
              <div className="flex h-[1248px] w-7 flex-col items-center bg-[#fafafa] pl-1 pt-[215px]">
                <div className="h-[1029px] w-4 rounded-full bg-[#c1c1c1]" />
              </div>
            </div>
            <div className="mt-[2px] flex">
              <div className="flex h-[26px] w-[2414px] items-center bg-[#fafafa] pl-[7px] pt-[2px]">
                <div className="h-4 w-[2175px] rounded-full bg-[#c1c1c1]" />
              </div>
              <div className="h-7 w-7 bg-white" />
            </div>
          </div>

          <div className="flex h-[1287px] w-[77px] shrink-0 flex-col items-center gap-1 border-b-2 border-l-2 border-r-2 border-b-[#b1b1b1] border-l-[#fafafa] border-r-[#b8b8b8] bg-linear-to-b from-[#f1f1f1] to-[#cccccc] pt-[13px]">
            <Slot on><PtrI /></Slot>
            <HSep />
            <Slot><NetHl /></Slot>
            <Slot><LocalRats /></Slot>
            <HSep />
            <Slot><AddModule /></Slot>
            <Slot><AddTrack /></Slot>
            <Slot><Ico><Zone fill="#5bab57" gap="#e8e8e8" core="#8f8f8f" /></Ico></Slot>
            <Slot><Keepout /></Slot>
            <HSep />
            <Slot><DashLine /></Slot>
            <Slot><CircleI /></Slot>
            <Slot><ArcI /></Slot>
            <Slot><TextI /></Slot>
            <HSep />
            <Slot><DimI /></Slot>
            <Slot><TargetI /></Slot>
            <HSep />
            <Slot><TrashI /></Slot>
            <HSep />
            <Slot><OriginI /></Slot>
            <Slot><GridOrigin /></Slot>
          </div>

          <div className="flex w-[14px] shrink-0 flex-col justify-center">
            <div className="flex h-[19px] items-center justify-center border-y border-[#d0d0d0] bg-[#fafafa]">
              <div className="h-3 w-3 rounded-full border border-[#a8a8a8] bg-[#d6d6d6]" />
            </div>
          </div>

          {/* layer manager */}
          <div className="flex flex-1 flex-col border-2 border-[#b4b4b4] bg-[#ebebeb]">
            <div className="flex h-[34px] shrink-0 items-center bg-linear-to-b from-[#dedede] to-[#c8c8c8] pl-[6px] text-[22px] tracking-[0.200px] text-black">Visibles</div>
            <div className="ml-[10px] mt-[11px] flex h-[1231px] w-[236px] flex-col border-2 border-[#b4b4b4]">
              <div className="flex h-[35px] shrink-0 items-end border-b-2 border-[#b4b4b4] bg-linear-to-b from-[#cdcdcd] to-[#eeeeee] pl-[10px]">
                <div className="-mb-[2px] flex h-[29px] w-[75px] items-center justify-center rounded-t-[6px] border-x-2 border-t-2 border-[#b4b4b4] bg-linear-to-b from-white to-[#f6f6f6] pr-[2px] pt-[2px] text-[16.500px] text-[#222]">Layer</div>
                <div className="flex h-[27px] w-[86px] items-center justify-center rounded-t-[6px] border-r-2 border-t-2 border-[#b4b4b4] bg-linear-to-b from-[#e4e4e4] to-[#dadada] pt-[3px] text-[16.500px] text-[#222]">Render</div>
              </div>
              <div className="h-2 shrink-0 border-b-2 border-[#b9b9b9] bg-[#e6e6e6]" />
              <div className="flex flex-col pt-[3px]">
                {LAYERS.map(([name, color], i) => (
                  <LayerRow key={name} name={name} color={color} active={i === 0} />
                ))}
              </div>
            </div>
          </div>
        </div>

        {/* message panel */}
        <div className="flex h-[56px] shrink-0 items-end overflow-hidden border-2 border-[#b4b4b4] bg-[#ebebeb] pl-[22px] text-[22px] leading-[30px] text-[#179393]">
          <div className="-mb-[4px] whitespace-nowrap tracking-[0.200px]">
            Wrote board file: '/Users/paul/Documents/Creative/KiCad/d1mini-to-esp8285-m3/_autosave-d1mini-to-esp8285-m3.kicad_pcb'
          </div>
        </div>

        {/* status bar */}
        <div className="flex flex-1 items-center whitespace-pre border-t-[3px] border-[#f8f8f8] pb-[6px] pl-[1422px] text-[23px] tracking-[0.350px] text-black">
          <div className="w-[128px]">Z 0.55</div>
          <div className="w-[376px]">X 128.000000  Y 108.000000</div>
          <div className="w-[580px]">dx 128.000000  dy 108.000000  dist 167.475</div>
          <div>mm</div>
        </div>
      </div>
    </div>
  );
}
